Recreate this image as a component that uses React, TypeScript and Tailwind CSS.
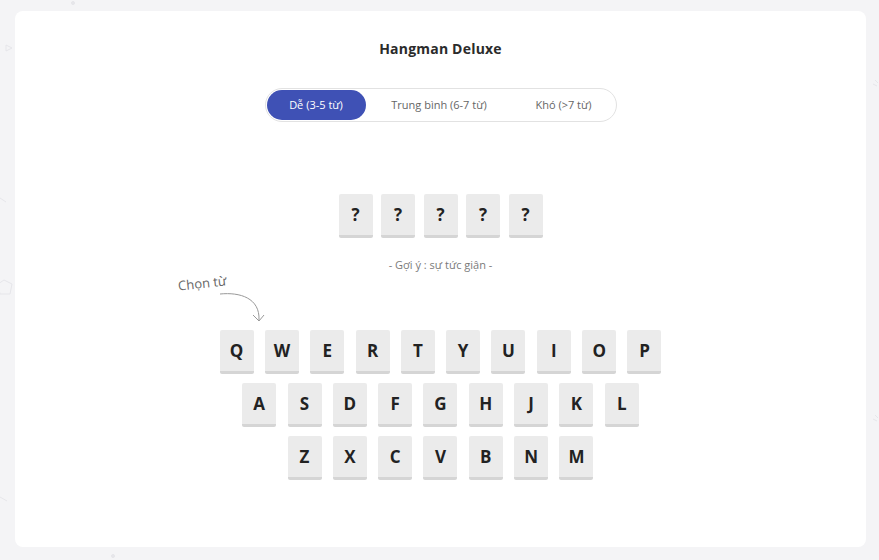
import React from "react";

const rows = [
  ["Q", "W", "E", "R", "T", "Y", "U", "I", "O", "P"],
  ["A", "S", "D", "F", "G", "H", "J", "K", "L"],
  ["Z", "X", "C", "V", "B", "N", "M"],
];

function Key({ ch }: { ch: string }) {
  return (
    <div className="w-[34px] h-[44px] rounded-[2px] bg-[#ebebeb] border-b-[3px] border-[#d5d5d5] flex items-center justify-center text-[17px] font-bold text-[#222]">
      {ch}
    </div>
  );
}

export default function App() {
  return (
    <div
      className="w-[879px] h-[560px] bg-[#f4f4f6] relative overflow-hidden"
      style={{ fontFamily: "'Open Sans', 'Noto Sans', sans-serif" }}
    >
      {/* faint background shapes */}
      <svg className="absolute left-0 top-0" width="879" height="560" fill="none" stroke="#e6e6ea" strokeWidth="1">
        <polygon points="6,45 12,48 6,51" />
        <polygon points="4,280 12,284 10,294 0,294 -2,284" />
        <path d="M0,198 L6,202" />
        <path d="M0,497 L7,501" />
        <circle cx="73" cy="3" r="1.5" fill="#e6e6ea" />
        <circle cx="113" cy="556" r="1.5" fill="#e6e6ea" />
        <path d="M875,80 l3,3 M873,84 l4,2" />
        <path d="M875,415 l3,3 M873,419 l4,2" />
      </svg>

      <div className="absolute left-[15px] top-[11px] w-[851px] h-[536px] bg-white rounded-[8px] flex flex-col items-center">
        <div className="mt-[29px] text-[14px] font-bold text-[#2b2b2b] leading-[18px] tracking-[0.2px]">Hangman Deluxe</div>

        <div className="mt-[30px] w-[352px] h-[34px] rounded-full border border-[#e2e2e2] p-[1px] flex items-center text-[11px] text-[#666]">
          <div className="w-[99px] h-[30px] rounded-full bg-[#3f51b5] text-white flex items-center justify-center">
            Dễ (3-5 từ)
          </div>
          <div className="w-[147px] h-[30px] flex items-center justify-center">Trung bình (6-7 từ)</div>
          <div className="flex-1 h-[30px] flex items-center justify-center">Khó (&gt;7 từ)</div>
        </div>

        <div className="mt-[72px] flex gap-[8.5px]">
          {[0, 1, 2, 3, 4].map((i) => (
            <Key key={i} ch="?" />
          ))}
        </div>

        <div className="mt-[20px] text-[11px] text-[#7a7a7a] leading-[14px]">- Gợi ý : sự tức giận -</div>

        <div className="relative mt-[58px] flex flex-col items-center gap-[9px]">
          <div
            className="absolute left-[-42px] top-[-56px] text-[13px] text-[#666] -rotate-[6deg]"
          >
            Chọn từ
          </div>
          <svg
            className="absolute left-[-5px] top-[-40px]"
            width="50"
            height="40"
            fill="none"
            stroke="#999"
            strokeWidth="1"
          >
            <path d="M5,4 C25,2 45,8 44,30" />
            <path d="M38,25 L44,31 L49,25" />
          </svg>
          {rows.map((r, i) => (
            <div key={i} className="flex gap-[11.33px]">
              {r.map((c) => (
                <Key key={c} ch={c} />
              ))}
            </div>
          ))}
        </div>
      </div>
    </div>
  );
}
